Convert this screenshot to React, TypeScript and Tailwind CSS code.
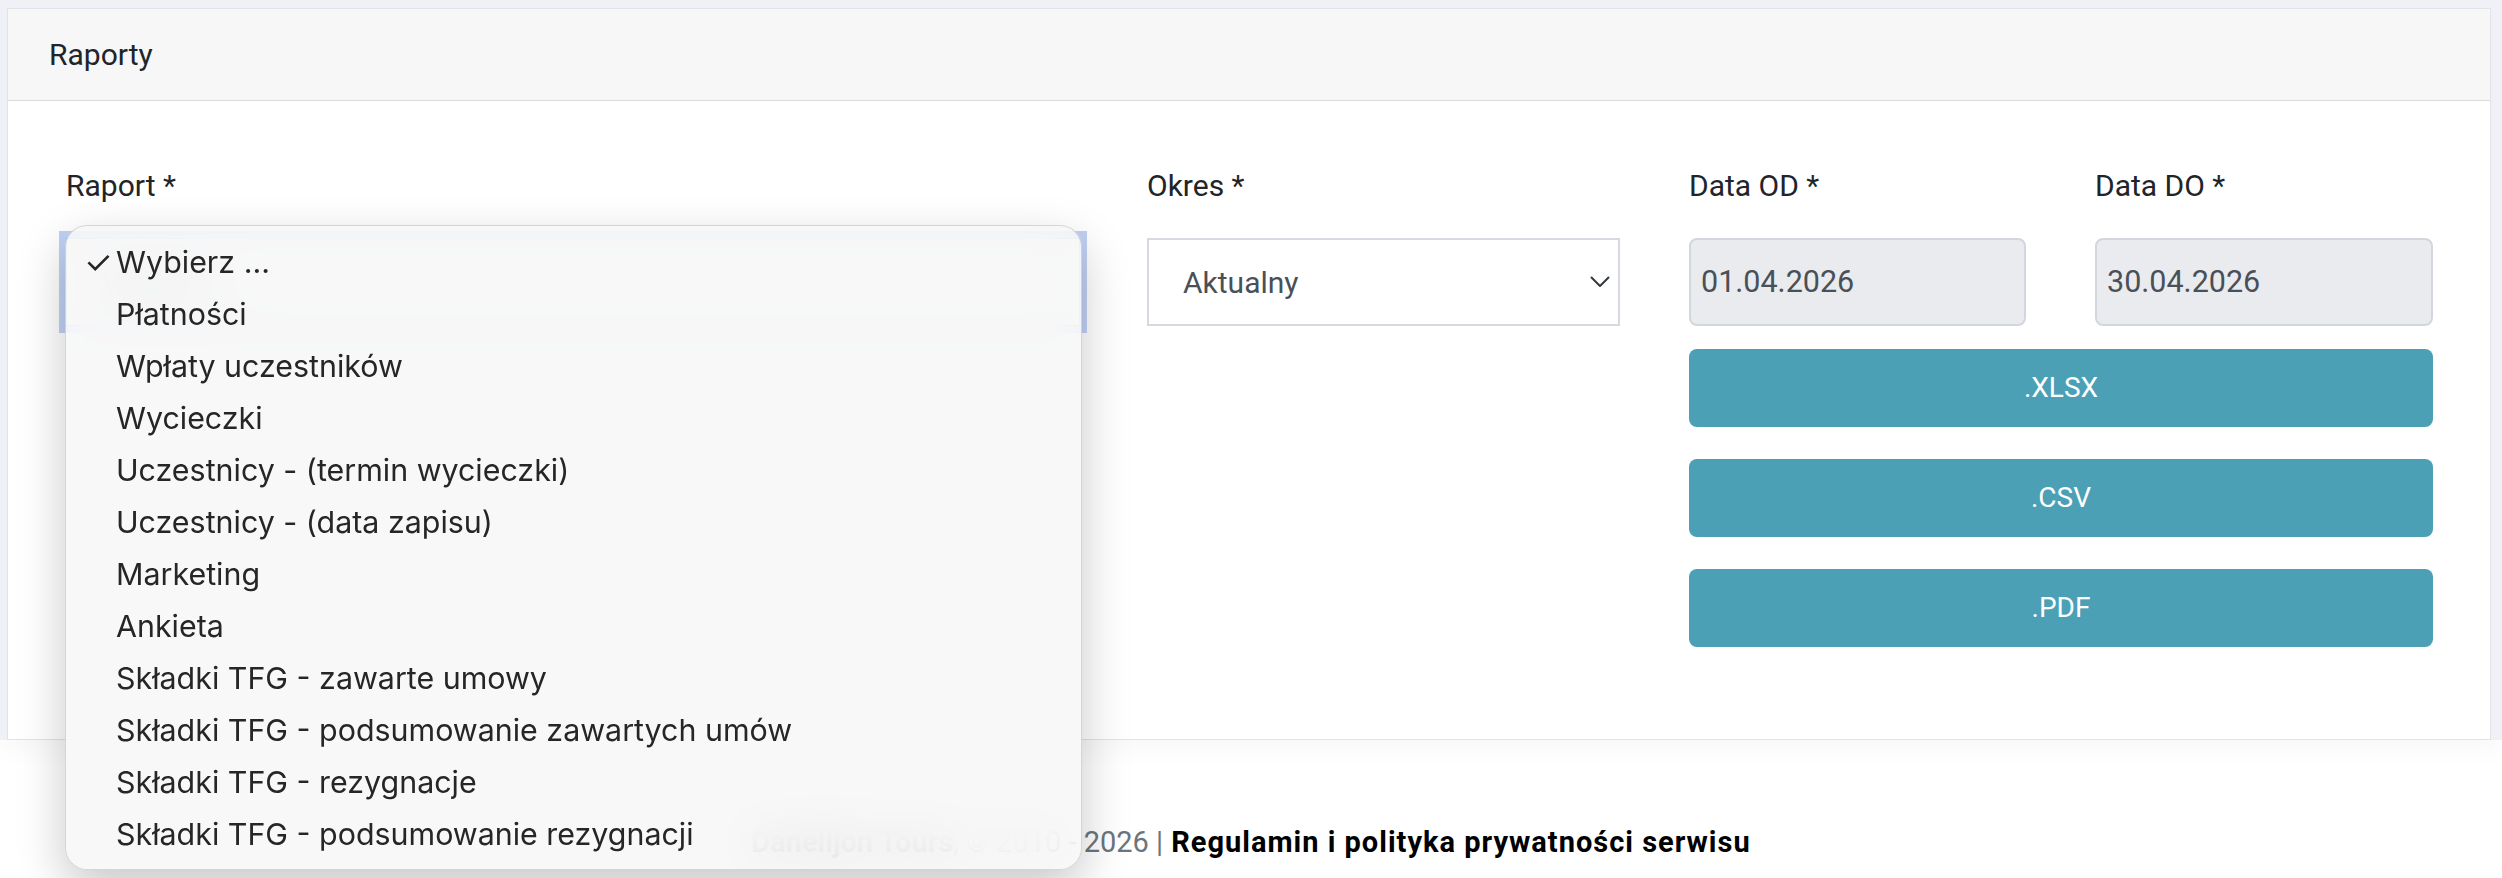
import React from "react";

const reportOptions = [
  "Wybierz ...",
  "Płatności",
  "Wpłaty uczestników",
  "Wycieczki",
  "Uczestnicy - (termin wycieczki)",
  "Uczestnicy - (data zapisu)",
  "Marketing",
  "Ankieta",
  "Składki TFG - zawarte umowy",
  "Składki TFG - podsumowanie zawartych umów",
  "Składki TFG - rezygnacje",
  "Składki TFG - podsumowanie rezygnacji",
];

function Chevron() {
  return (
    <svg width="20" height="12" viewBox="0 0 20 12" fill="none">
      <path d="M1.5 1.5 L10 10 L18.5 1.5" stroke="#343a40" strokeWidth="2" strokeLinecap="round" strokeLinejoin="round" />
    </svg>
  );
}

function Label({ children }: { children: React.ReactNode }) {
  return <div className="text-[30px] leading-[36px] text-[#212529] mb-[34px]">{children}</div>;
}

function ExportButton({ label }: { label: string }) {
  return (
    <button className="h-[78px] w-full rounded-[8px] bg-[#4ba0b6] text-white text-[28px] flex items-center justify-center">
      {label}
    </button>
  );
}

export default function App() {
  return (
    <div className="relative w-[2502px] h-[878px] overflow-hidden bg-white font-['Roboto','Liberation_Sans',sans-serif]">
      <div className="bg-[#f0f1f6] pt-[8px] pl-[7px] pr-[11px] shadow-[0_10px_24px_rgba(0,0,0,0.03)]">
        <div className="bg-white border border-[#e2e3ea]">
          <div className="h-[92px] bg-[#f7f7f7] border-b border-[#dcdcdc] flex items-center pl-[41px] text-[30px] text-[#212529]">
            Raporty
          </div>
          <div className="flex pt-[67px] pb-[92px] pl-[58px] pr-[57px]">
            <div className="w-[1014px]">
              <Label>Raport *</Label>
              <div className="h-[88px] border border-[#80bdff] bg-white shadow-[0_0_0_7px_rgba(100,140,230,0.4)] flex items-center pl-[36px] text-[30px] text-[#495057]">
                Wybierz ...
              </div>
            </div>
            <div className="w-[473px] ml-[67px]">
              <Label>Okres *</Label>
              <div className="h-[88px] border-2 border-[#d6dae0] bg-white flex items-center justify-between pl-[34px] pr-[8px] text-[30px] text-[#495057]">
                <span>Aktualny</span>
                <Chevron />
              </div>
            </div>
            <div className="flex-1 ml-[69px] flex flex-col">
              <div className="flex gap-[69px]">
                <div className="w-[337px]">
                  <Label>Data OD *</Label>
                  <div className="h-[88px] rounded-[8px] border-2 border-[#d3d6dc] bg-[#eaebef] flex items-center pl-[10px] text-[30.5px] text-[#495057]">
                    01.04.2026
                  </div>
                </div>
                <div className="flex-1">
                  <Label>Data DO *</Label>
                  <div className="h-[88px] rounded-[8px] border-2 border-[#d3d6dc] bg-[#eaebef] flex items-center pl-[10px] text-[30.5px] text-[#495057]">
                    30.04.2026
                  </div>
                </div>
              </div>
              <div className="mt-[23px] flex flex-col gap-[32px]">
                <ExportButton label=".XLSX" />
                <ExportButton label=".CSV" />
                <ExportButton label=".PDF" />
              </div>
            </div>
          </div>
        </div>
      </div>

      <div className="pt-[86px] flex justify-center text-[29px] leading-[32px]">
        <span className="text-[#6c757d]">
          <span className="font-bold text-[#333]">Danelljon Tours</span>, © 2010 - 2026 |{" "}
        </span>
        <span className="font-bold text-black ml-[8px] tracking-[1px]">Regulamin i polityka prywatności serwisu</span>
      </div>

      {/* native select popup, open over the report field */}
      <div className="absolute left-[65px] top-[225px] w-[1017px] h-[645px] rounded-[22px] bg-[rgba(247,247,247,0.84)] backdrop-blur-[24px] border border-[rgba(0,0,0,0.14)] shadow-[0_18px_48px_rgba(0,0,0,0.22)] pt-[11px] font-['Inter','Noto_Sans',sans-serif] text-[30.4px] text-[#262626]">
        {reportOptions.map((opt, i) => (
          <div key={opt} className="relative h-[52px] flex items-center pl-[50px]">
            {i === 0 && <span className="absolute left-[18px] text-[32px]">✓</span>}
            {opt}
          </div>
        ))}
      </div>
    </div>
  );
}
